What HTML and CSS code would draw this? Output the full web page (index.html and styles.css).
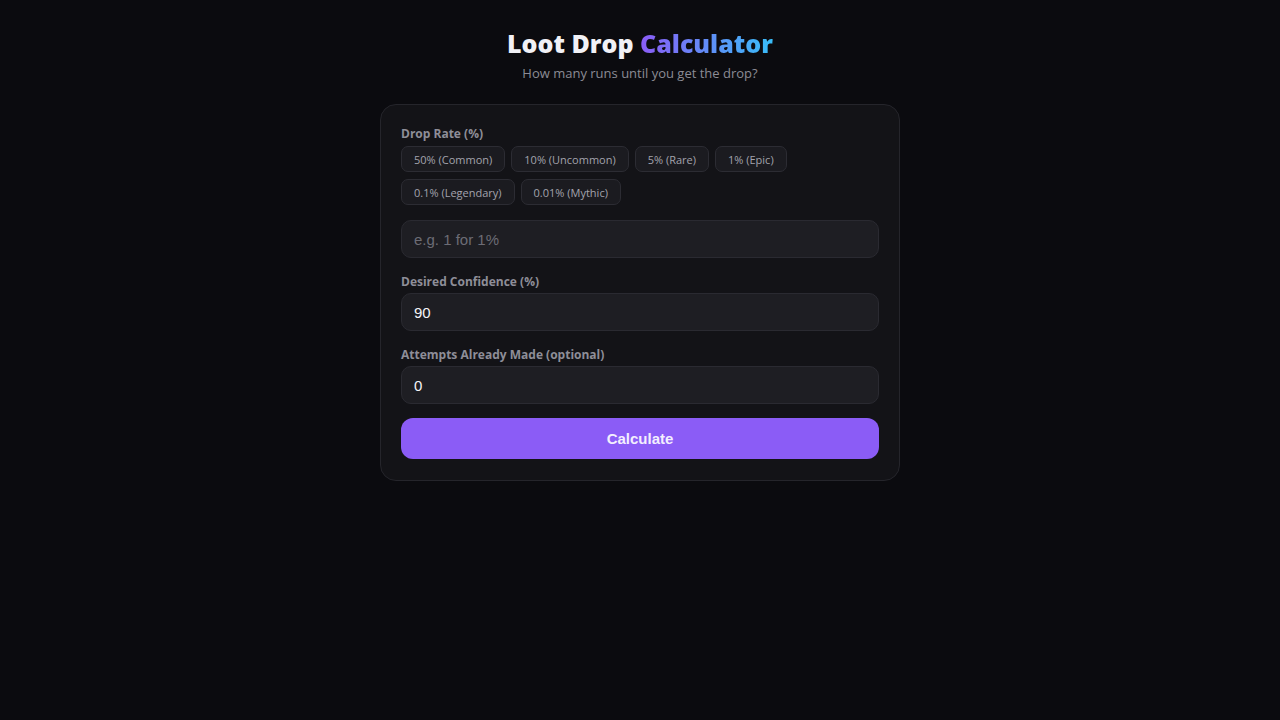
FILE: index.html
```html
<!DOCTYPE html>
<html>
<head>
<meta charset="utf-8">
<link rel="stylesheet" href="styles.css">
</head>
<body>
<main class="page">
  <header class="head">
    <h1 class="title">Loot Drop <span class="grad">Calculator</span></h1>
    <p class="sub">How many runs until you get the drop?</p>
  </header>
  <section class="card">
    <label class="label">Drop Rate (%)</label>
    <div class="chips">
      <button class="chip">50% (Common)</button>
      <button class="chip">10% (Uncommon)</button>
      <button class="chip">5% (Rare)</button>
      <button class="chip">1% (Epic)</button>
      <button class="chip">0.1% (Legendary)</button>
      <button class="chip">0.01% (Mythic)</button>
    </div>
    <input class="field" type="text" placeholder="e.g. 1 for 1%">
    <label class="label lab2">Desired Confidence (%)</label>
    <input class="field" type="text" value="90">
    <label class="label lab2">Attempts Already Made (optional)</label>
    <input class="field" type="text" value="0">
    <button class="calc">Calculate</button>
  </section>
</main>
</body>
</html>
```
FILE: styles.css
```css
* { box-sizing: border-box; }
html, body { margin: 0; padding: 0; }
body {
  background: #0b0b0f;
  font-family: "Open Sans", "Noto Sans", sans-serif;
  color: #e5e5ea;
  width: 1280px;
  height: 720px;
}
.page {
  display: flex;
  flex-direction: column;
  align-items: center;
  padding-top: 27px;
}
.head { text-align: center; margin-bottom: 22px; }
.title {
  margin: 0;
  font-size: 25px;
  line-height: 32px;
  font-weight: 800;
  color: #f1f1f6;
}
.grad {
  background: linear-gradient(90deg, #8b5cf6, #38bdf8);
  -webkit-background-clip: text;
  background-clip: text;
  color: transparent;
}
.sub {
  margin: 5px 0 0;
  font-size: 13px;
  line-height: 18px;
  color: #8b8b95;
}
.card {
  width: 520px;
  background: #131317;
  border: 1px solid #25252b;
  border-radius: 16px;
  padding: 20px 20px 21px;
  display: flex;
  flex-direction: column;
}
.label {
  display: block;
  font-size: 12px;
  font-weight: 700;
  line-height: 18px;
  color: #8e8e98;
  margin-bottom: 3px;
}
.lab2 { margin-top: 15px; margin-bottom: 2px; }
.chips {
  display: flex;
  flex-wrap: wrap;
  gap: 7px 6px;
  margin-bottom: 15px;
}
.chip {
  height: 26px;
  padding: 0 12px;
  border: 1px solid #2c2c33;
  border-radius: 7px;
  background: #1b1b20;
  color: #a3a3ad;
  font-family: "Open Sans", "Noto Sans", sans-serif;
  font-size: 11px;
}
.field {
  width: 100%;
  height: 38px;
  background: #1e1e23;
  border: 1px solid #2a2a31;
  border-radius: 10px;
  padding: 0 12px;
  font-family: "Liberation Sans", Arial, sans-serif;
  font-size: 15px;
  color: #f4f4f8;
  outline: none;
}
.field::placeholder { color: #6c6c75; }
.calc {
  margin-top: 14px;
  height: 41px;
  border: none;
  border-radius: 12px;
  background: #8b5cf6;
  color: #f3effe;
  font-family: "Liberation Sans", Arial, sans-serif;
  font-weight: 700;
  font-size: 15px;
}
```
